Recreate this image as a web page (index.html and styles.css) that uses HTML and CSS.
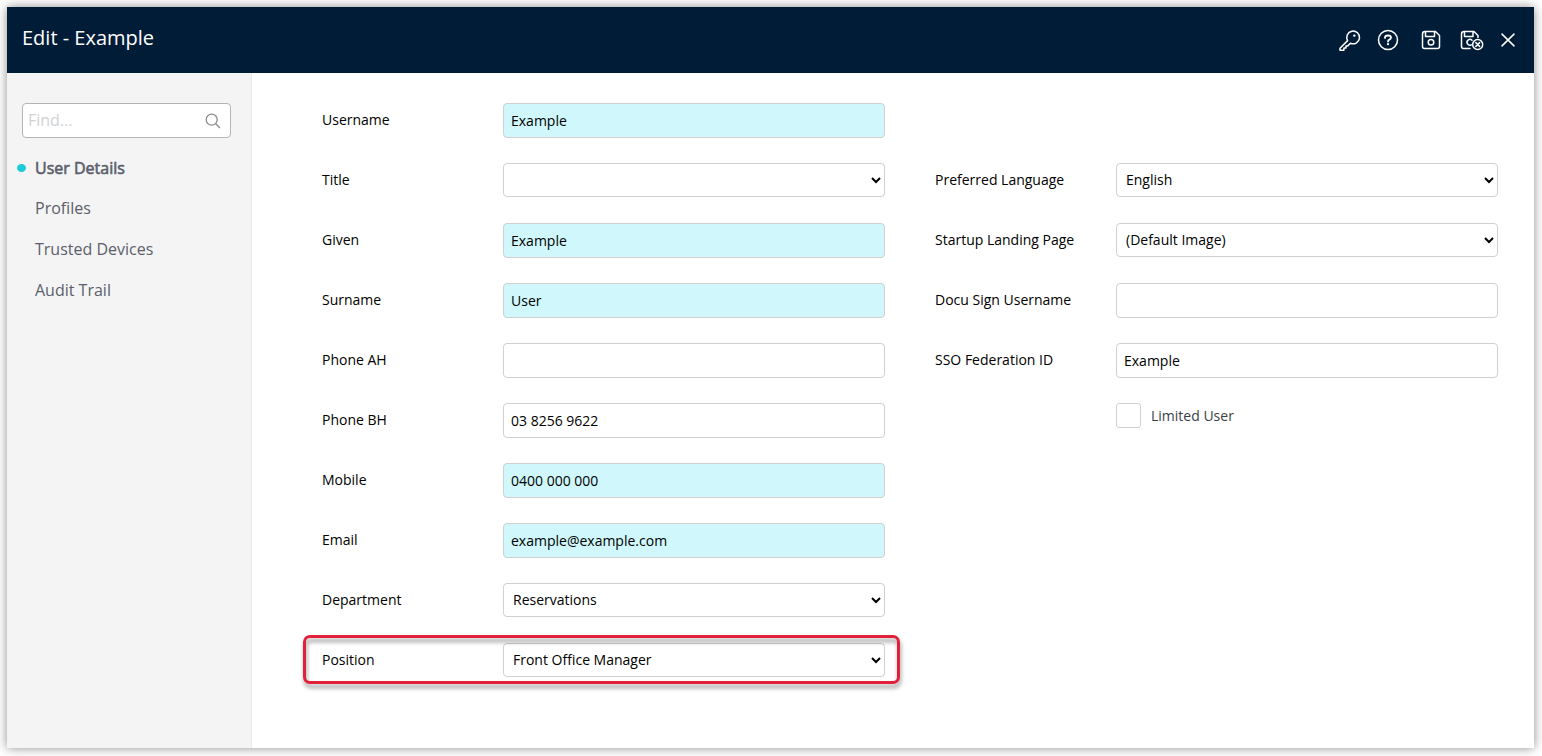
FILE: index.html
```html
<!DOCTYPE html>
<html lang="en">
<head>
<meta charset="utf-8">
<title>Edit - Example</title>
<link rel="stylesheet" href="styles.css">
</head>
<body>
<div class="dialog">
  <header class="header">
    <h1 class="title">Edit - Example</h1>
    <div class="actions">
      <svg class="icon icon-key" width="24" height="24" viewBox="0 0 24 24"><path d="M9.600 12.600 2 20.200V22.200H5.900V20H8V17.900H9.700L12.400 15.200A6.400 6.400 0 1 0 9.600 12.600Z"/><circle class="dot" cx="16.300" cy="7.600" r="1.200"/></svg>
      <svg class="icon icon-help" width="24" height="24" viewBox="0 0 24 24"><circle cx="12" cy="12" r="9.500"/><path class="heavy" d="M9 9.900V9.200Q9.300 7.500 12 7.500Q15 7.500 15 9.600Q15 11 13.400 11.600Q12 12.100 12 13.500"/><circle class="dot" cx="12" cy="16.200" r="1.100"/></svg>
      <svg class="icon icon-save" width="24" height="24" viewBox="0 0 24 24"><path d="M6 3.500H16.500L20.500 7.500V18.500Q20.500 20.500 18.500 20.500H5.500Q3.500 20.500 3.500 18.500V6Q3.500 3.500 6 3.500ZM6.500 3.500V8.500H15.500V3.500"/><circle cx="12" cy="14.300" r="2.800"/></svg>
      <svg class="icon icon-save-close" width="26" height="24" viewBox="0 0 26 24"><path d="M12 20.500H5.500Q3.500 20.500 3.500 18.500V6Q3.500 3.500 6 3.500H16L20 7.500V9.500M6.500 3.500V8.500H15V3.500M14 12.300A2.900 2.900 0 1 0 13.300 16.900"/><circle cx="19.700" cy="16.500" r="5"/><path d="M17.800 14.600 21.600 18.400M21.600 14.600 17.800 18.400"/></svg>
      <svg class="icon icon-close" width="16" height="16" viewBox="0 0 16 16"><path d="M2 2.100 14 13.900M14 2.100 2 13.900"/></svg>
    </div>
  </header>
  <div class="body">
    <aside class="sidebar">
      <div class="search">
        <input class="search-input" type="text" placeholder="Find...">
        <svg class="search-icon" width="16" height="16" viewBox="0 0 16 16"><circle cx="6.700" cy="6.700" r="5.500"/><path d="M10.700 10.700 15 15"/></svg>
      </div>
      <nav class="nav">
        <a class="nav-item active">User Details</a>
        <a class="nav-item">Profiles</a>
        <a class="nav-item">Trusted Devices</a>
        <a class="nav-item">Audit Trail</a>
      </nav>
    </aside>
    <main class="form">
      <section class="column">
        <div class="row"><label class="label">Username</label><input class="field required" value="Example"></div>
        <div class="row"><label class="label">Title</label><select class="field select"><option></option></select></div>
        <div class="row"><label class="label">Given</label><input class="field required" value="Example"></div>
        <div class="row"><label class="label">Surname</label><input class="field required" value="User"></div>
        <div class="row"><label class="label">Phone AH</label><input class="field"></div>
        <div class="row"><label class="label">Phone BH</label><input class="field" value="03 8256 9622"></div>
        <div class="row"><label class="label">Mobile</label><input class="field required" value="0400 000 000"></div>
        <div class="row"><label class="label">Email</label><input class="field required" value="example@example.com"></div>
        <div class="row"><label class="label">Department</label><select class="field select"><option>Reservations</option></select></div>
        <div class="row highlighted"><label class="label">Position</label><select class="field select"><option>Front Office Manager</option></select></div>
      </section>
      <section class="column column-right">
        <div class="row"><label class="label">Preferred Language</label><select class="field select"><option>English</option></select></div>
        <div class="row"><label class="label">Startup Landing Page</label><select class="field select"><option>(Default Image)</option></select></div>
        <div class="row"><label class="label">Docu Sign Username</label><input class="field"></div>
        <div class="row"><label class="label">SSO Federation ID</label><input class="field" value="Example"></div>
        <label class="check"><input class="checkbox" type="checkbox">Limited User</label>
      </section>
    </main>
  </div>
</div>
</body>
</html>
```
FILE: styles.css
```css
*, *::before, *::after { box-sizing: border-box; }

body {
  margin: 0;
  height: 756px;
  padding: 7px 8px 8px 7px;
  overflow: hidden;
  background: #fff;
  font-family: "Open Sans", sans-serif;
  font-size: 14px;
  color: #000;
}

.dialog {
  display: flex;
  flex-direction: column;
  height: 741px;
  background: #fff;
  box-shadow: 0 0 10px rgba(0, 0, 0, 0.45);
}

.header {
  display: flex;
  align-items: center;
  justify-content: space-between;
  height: 66px;
  padding: 0 18px 0 15px;
  background: #001c36;
  color: #fff;
}

.title {
  margin: 0 0 4px;
  font-size: 20px;
  font-weight: 400;
  line-height: 28px;
}

.actions { display: flex; align-items: center; padding-bottom: 1px; }

.icon {
  fill: none;
  stroke: #fff;
  stroke-width: 1.5;
  stroke-linejoin: round;
  stroke-linecap: round;
}
.icon .dot { fill: #fff; stroke: none; }
.icon .heavy { stroke-width: 1.8; }
.icon-help { margin-left: 14px; }
.icon-save { margin-left: 19px; }
.icon-save-close { margin-left: 15px; }
.icon-close { margin-left: 16px; }

.body { display: flex; flex: 1; }

.sidebar {
  width: 245px;
  padding: 30px 20px 0 15px;
  background: #f4f4f4;
  border-right: 1px solid #e8e8e8;
}

.search {
  display: flex;
  align-items: center;
  width: 209px;
  height: 35px;
  padding: 0 9px 0 5px;
  background: #fff;
  border: 1px solid #b4b4b4;
  border-radius: 4px;
}

.search-input {
  flex: 1;
  min-width: 0;
  padding: 0 0 2px;
  border: 0;
  outline: 0;
  background: transparent;
  font: 16px "Open Sans", sans-serif;
}
.search-input::placeholder { color: #d2d2d2; }
.search-icon { fill: none; stroke: #8c8c8c; stroke-width: 1.3; }

.nav { display: flex; flex-direction: column; padding: 10px 0 0 13px; }

.nav-item {
  position: relative;
  height: 41px;
  font-size: 16px;
  line-height: 40px;
  color: #5b5f6b;
}
.nav-item.active { height: 40px; -webkit-text-stroke: 0.6px #5b5f6b; }
.nav-item.active::before {
  content: "";
  position: absolute;
  left: -18px;
  top: 16px;
  width: 9px;
  height: 8px;
  border-radius: 50%;
  background: #1bcbd9;
}

.form { display: flex; flex: 1; gap: 50px; padding: 30px 0 0 70px; }
.column { width: 563px; }
.column-right { padding-top: 60px; }

.row {
  position: relative;
  display: flex;
  align-items: flex-start;
  height: 60px;
}

.label { width: 181px; line-height: 34px; }

.field {
  width: 382px;
  height: 35px;
  padding: 0 7px;
  border: 1px solid #d0d0d0;
  border-radius: 4px;
  outline: 0;
  background: #fff;
  color: #000;
  font: 14px "Open Sans", sans-serif;
}
.field.required { background: #cff7fc; }
.field.select { height: 34px; padding: 0 0 1px 5px; }

.highlighted::after {
  content: "";
  position: absolute;
  left: -19px;
  top: -8px;
  width: 597px;
  height: 49px;
  border: 3px solid #e2203a;
  border-radius: 7px;
  filter: drop-shadow(1px 4px 2px rgba(0, 0, 0, 0.4));
  pointer-events: none;
}

.check {
  display: flex;
  align-items: center;
  gap: 10px;
  padding-left: 181px;
  color: #3c3f46;
}

.checkbox {
  appearance: none;
  width: 25px;
  height: 25px;
  margin: 0;
  border: 1px solid #d0d0d0;
  border-radius: 3px;
  background: #fff;
}
```
